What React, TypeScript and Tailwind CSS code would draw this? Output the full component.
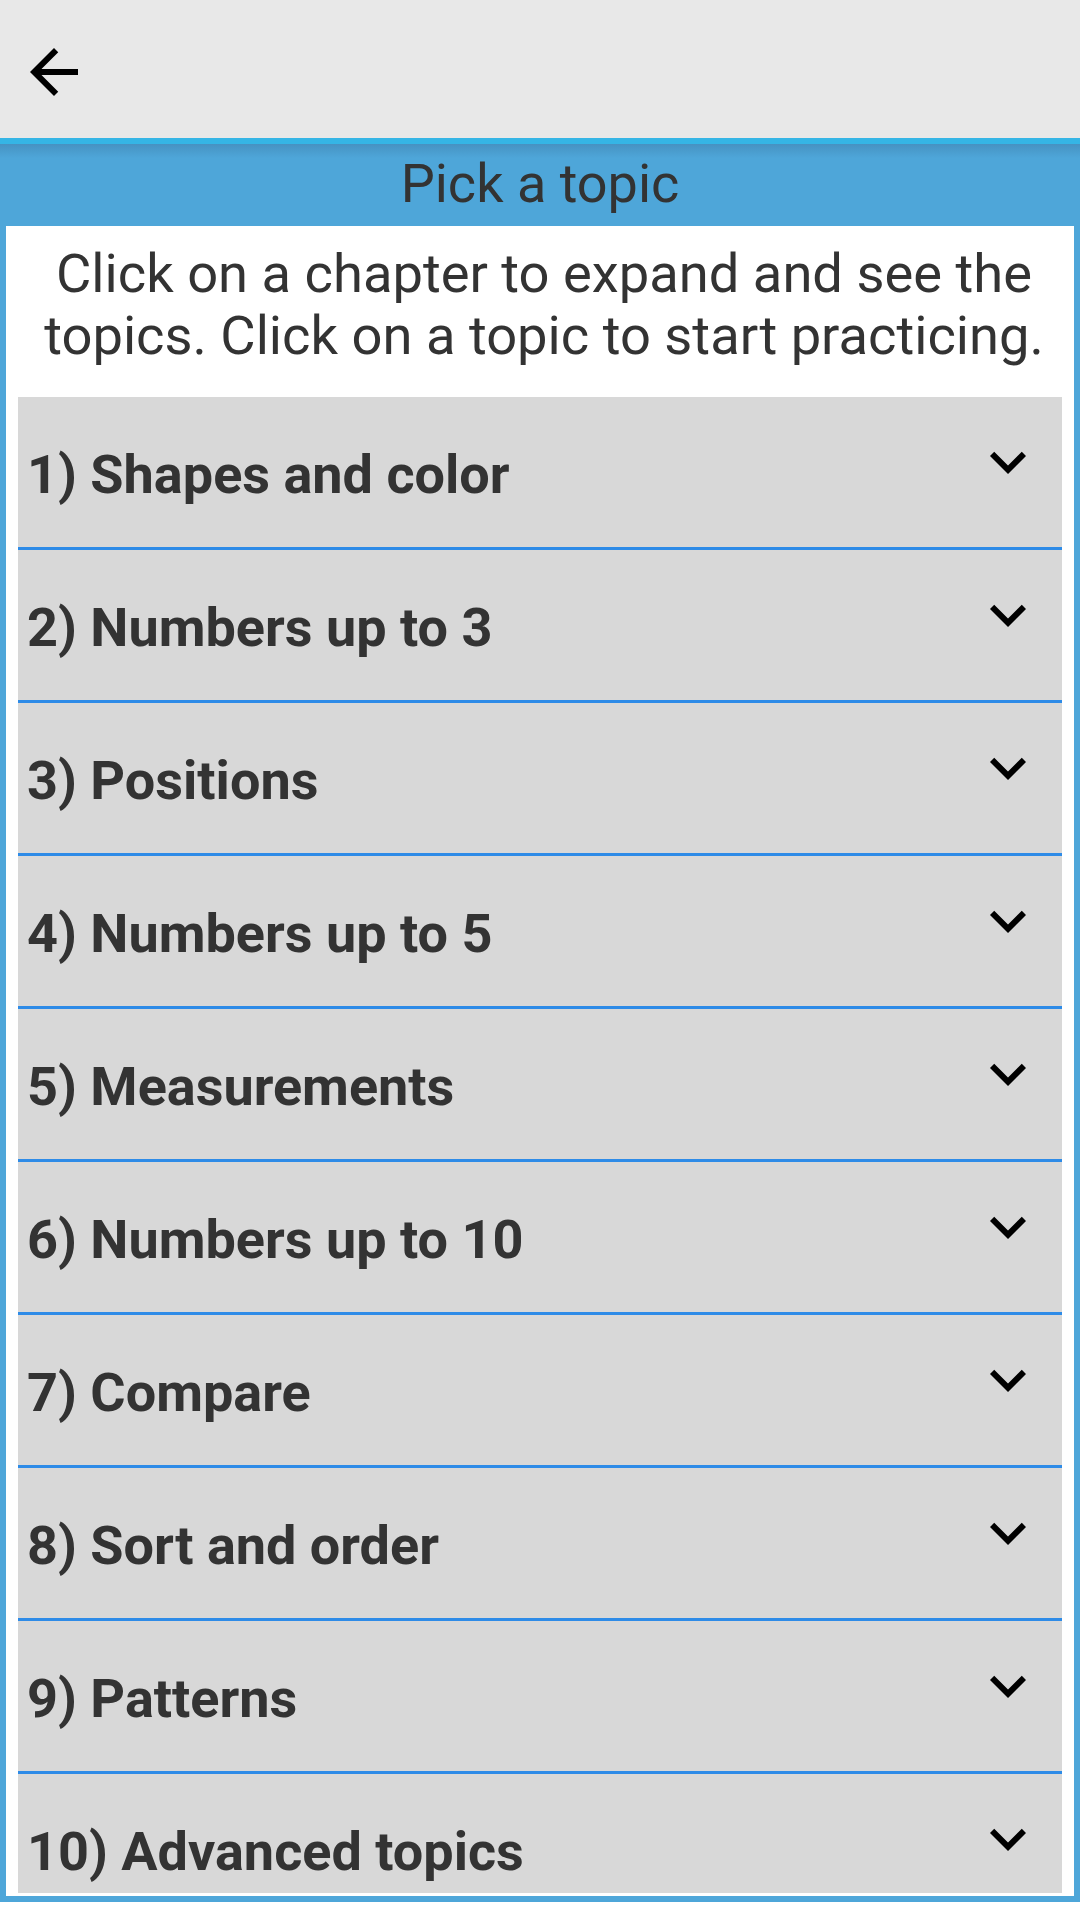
import React from "react";

const chapters = [
  "1) Shapes and color",
  "2) Numbers up to 3",
  "3) Positions",
  "4) Numbers up to 5",
  "5) Measurements",
  "6) Numbers up to 10",
  "7) Compare",
  "8) Sort and order",
  "9) Patterns",
  "10) Advanced topics",
];

const BackArrow = () => (
  <svg width="72" height="72" viewBox="0 0 24 24" fill="#000">
    <path d="M20 11H7.83l5.59-5.59L12 4l-8 8 8 8 1.41-1.41L7.83 13H20v-2z" />
  </svg>
);

const ExpandMore = () => (
  <svg width="72" height="72" viewBox="0 0 24 24" fill="#000">
    <path d="M16.59 8.59L12 13.17 7.41 8.59 6 10l6 6 6-6z" />
  </svg>
);

const ChapterRow = ({ title }: { title: string }) => (
  <div className="h-[153px] shrink-0 flex border-b-[3px] border-[#2e8be7] bg-[#d8d8d8]">
    <div className="flex-1 flex items-center pl-[9px] pt-[4px] text-[54px] font-bold text-[#333333]">
      {title}
    </div>
    <div className="pt-[29px] pr-[18px]">
      <ExpandMore />
    </div>
  </div>
);

export default function App() {
  return (
    <div
      className="w-[1080px] h-[1920px] bg-white overflow-hidden"
      style={{ fontFamily: "Roboto, 'Noto Sans', sans-serif" }}
    >
      {/* action bar */}
      <div className="h-[138px] bg-[#e8e8e8] pl-[18px] pt-[36px]">
        <BackArrow />
      </div>
      <div className="h-[6px] bg-[#35b5e5]" />

      {/* blue frame */}
      <div className="h-[1758px] bg-[#4ea6d9] px-[6px] pb-[6px] flex flex-col">
        <div className="h-[82px] -mx-[6px] bg-[linear-gradient(to_bottom,#4692c2,#4ea6d9_14px)] flex items-center justify-center pb-[3px] text-[54px] text-[#333333]">
          Pick a topic
        </div>

        <div className="flex-1 min-h-0 bg-white px-[12px] pb-[3px] flex flex-col">
          <p className="pt-[17px] pb-[30px] pl-[8px] text-center text-[54.3px] leading-[62px] text-[#333333]">
            Click on a chapter to expand and see the
            <br />
            topics. Click on a topic to start practicing.
          </p>

          <div className="flex-1 min-h-0 overflow-hidden bg-[#d8d8d8] flex flex-col">
            {chapters.map((c) => (
              <ChapterRow key={c} title={c} />
            ))}
          </div>
        </div>
      </div>
    </div>
  );
}
